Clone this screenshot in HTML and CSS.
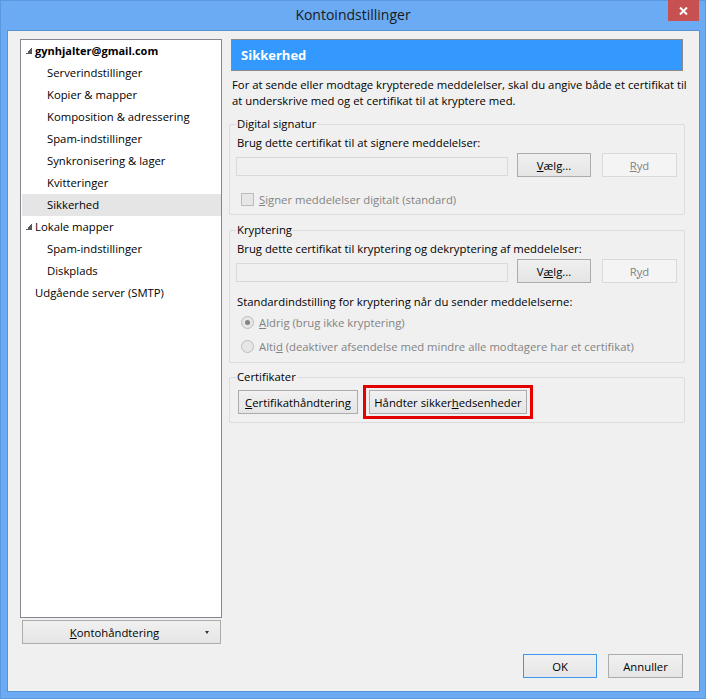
FILE: index.html
```html
<!DOCTYPE html>
<html lang="da">
<head>
<meta charset="utf-8">
<title>Kontoindstillinger</title>
<link rel="stylesheet" href="styles.css">
</head>
<body>
<div class="window">
  <div class="titlebar">
    <span class="title">Kontoindstillinger</span>
    <div class="close" aria-label="Luk">
      <svg width="9" height="8" viewBox="0 0 9 8"><path d="M1 0.5 L8 7.5 M8 0.5 L1 7.5" stroke="#fff" stroke-width="2" fill="none"/></svg>
    </div>
  </div>
  <div class="client">
    <div class="main">
      <div class="left">
        <ul class="tree">
          <li class="row root"><span class="twisty"></span><span class="bold">gynhjalter@gmail.com</span></li>
          <li class="row child">Serverindstillinger</li>
          <li class="row child">Kopier &amp; mapper</li>
          <li class="row child">Komposition &amp; adressering</li>
          <li class="row child">Spam-indstillinger</li>
          <li class="row child">Synkronisering &amp; lager</li>
          <li class="row child">Kvitteringer</li>
          <li class="row child selected">Sikkerhed</li>
          <li class="row root"><span class="twisty"></span>Lokale mapper</li>
          <li class="row child">Spam-indstillinger</li>
          <li class="row child">Diskplads</li>
          <li class="row root noicon">Udgående server (SMTP)</li>
        </ul>
        <button class="btn acct"><span><u>K</u>ontohåndtering</span><span class="drop"></span></button>
      </div>
      <div class="right">
        <div class="header">Sikkerhed</div>
        <p class="desc">For at sende eller modtage krypterede meddelelser, skal du angive både et certifikat til<br>at underskrive med og et certifikat til at kryptere med.</p>

        <fieldset class="group">
          <legend>Digital signatur</legend>
          <div class="label">Brug dette certifikat til at signere meddelelser:</div>
          <div class="certrow">
            <div class="field"></div>
            <button class="btn pick"><u>V</u>ælg...</button>
            <button class="btn clear" disabled><u>R</u>yd</button>
          </div>
          <div class="check disabled"><span class="box"></span><span><u>S</u>igner meddelelser digitalt (standard)</span></div>
        </fieldset>

        <fieldset class="group g2">
          <legend>Kryptering</legend>
          <div class="label">Brug dette certifikat til kryptering og dekryptering af meddelelser:</div>
          <div class="certrow">
            <div class="field"></div>
            <button class="btn pick">V<u>æ</u>lg...</button>
            <button class="btn clear" disabled>R<u>y</u>d</button>
          </div>
          <div class="label std">Standardindstilling for kryptering når du sender meddelelserne:</div>
          <div class="radio disabled"><span class="dot checked"></span><span><u>A</u>ldrig (brug ikke kryptering)</span></div>
          <div class="radio disabled"><span class="dot"></span><span>Alti<u>d</u> (deaktiver afsendelse med mindre alle modtagere har et certifikat)</span></div>
        </fieldset>

        <fieldset class="group g3">
          <legend>Certifikater</legend>
          <div class="btnrow">
            <button class="btn cert"><u>C</u>ertifikathåndtering</button>
            <div class="mark"><button class="btn devices">Håndter sikker<u>h</u>edsenheder</button></div>
          </div>
        </fieldset>
      </div>
    </div>
    <div class="footer">
      <button class="btn ok">OK</button>
      <button class="btn cancel">Annuller</button>
    </div>
  </div>
</div>
</body>
</html>
```
FILE: styles.css
```css
* { box-sizing: border-box; }
html, body { margin: 0; padding: 0; }
body {
  width: 706px;
  height: 699px;
  overflow: hidden;
  font-family: "Open Sans", "Noto Sans", sans-serif;
  font-size: 11.3px;
  color: #000;
}
.window {
  position: relative;
  width: 706px;
  height: 699px;
  background: #6aabf4;
  box-shadow: inset 0 0 0 1px #5d98df;
}
.titlebar {
  height: 30px;
  display: flex;
  align-items: center;
  justify-content: center;
}
.title {
  font-size: 14px;
  color: #1a1a1a;
  margin-top: -1px;
}
.close {
  position: absolute;
  left: 668px;
  top: 0;
  width: 31px;
  height: 21px;
  background: #c75050;
  display: flex;
  align-items: center;
  justify-content: center;
}
.client {
  margin: 0 6px 0 7px;
  height: 662px;
  border: 1px solid #5892d6;
  background: #f0f0f0;
  display: flex;
  flex-direction: column;
  padding: 8px 14px 13px 12px;
}
.main {
  flex: 1;
  display: flex;
  gap: 7px;
}
.left {
  width: 202px;
  display: flex;
  flex-direction: column;
}
.tree {
  flex: 1;
  margin: 0;
  padding: 0;
  list-style: none;
  background: #fff;
  border: 1px solid #828790;
}
.row {
  height: 22px;
  line-height: 22px;
  white-space: nowrap;
  display: flex;
  align-items: center;
}
.root { padding-left: 5px; }
.root.noicon { padding-left: 14px; }
.child { padding-left: 26px; }
.selected { background: #e5e5e5; margin-left: 1px; padding-left: 25px; }
.twisty {
  width: 6px;
  height: 6px;
  margin-right: 3px;
  background: linear-gradient(to bottom right, transparent 50%, #575757 50%);
}
.bold { font-weight: bold; font-size: 11px; }
.btn {
  font: inherit;
  color: #000;
  height: 24px;
  padding: 0;
  border: 1px solid #acacac;
  background: linear-gradient(#f0f0f0, #e5e5e5);
  border-radius: 0;
  cursor: default;
  white-space: nowrap;
}
.btn:disabled {
  color: #838383;
  background: #f4f4f4;
  border-color: #d9d9d9;
}
.acct {
  margin: 2px 1px 0 2px;
  position: relative;
  display: flex;
  align-items: center;
  justify-content: center;
  padding-right: 14px;
}
.drop {
  position: absolute;
  right: 11px;
  top: 10px;
  width: 0;
  height: 0;
  border-left: 2.5px solid transparent;
  border-right: 2.5px solid transparent;
  border-top: 3px solid #333;
}
.right {
  width: 456px;
  display: flex;
  flex-direction: column;
}
.header {
  margin: 0 2px;
  height: 32px;
  border: 1px solid #8a8a8a;
  background: #3399ff;
  color: #fff;
  font-weight: bold;
  font-size: 13px;
  line-height: 30px;
  padding-left: 9px;
}
.desc {
  margin: 6px 0 0;
  padding-left: 3px;
  line-height: 16px;
  white-space: nowrap;
}
.group {
  margin: 7px 0 0;
  padding: 0 7px 7px 6px;
  border: 1px solid #dcdcdc;
  border-radius: 2px;
  min-width: 0;
}
.group legend {
  padding: 0 1px;
  line-height: 16px;
}
.g2 { padding-bottom: 4px; }
.g3 { margin-top: 6px; padding-bottom: 8px; }
.label {
  margin-top: 3px;
  padding-left: 1px;
  line-height: 16px;
  white-space: nowrap;
}
.label.std { margin-top: 11px; }
.certrow {
  margin-top: 2px;
  display: flex;
  align-items: flex-end;
}
.field {
  width: 272px;
  height: 19px;
  margin-bottom: 1px;
  border: 1px solid #d9d9d9;
  background: #f0f0f0;
}
.pick { width: 74px; margin-left: 9px; }
.clear { width: 75px; margin-left: 11px; }
.check, .radio {
  display: flex;
  align-items: center;
  white-space: nowrap;
}
.check { margin-top: 14px; height: 16px; }
.radio { height: 24px; }
.disabled { color: #838383; }
.box {
  width: 13px;
  height: 13px;
  margin: 0 5px 0 5px;
  border: 1px solid #bcbcbc;
  background: #e6e6e6;
}
.dot {
  width: 13px;
  height: 13px;
  margin: 0 5px 0 5px;
  border: 1px solid #bcbcbc;
  border-radius: 50%;
  background: #e6e6e6;
  display: flex;
  align-items: center;
  justify-content: center;
}
.dot.checked::after {
  content: "";
  width: 5px;
  height: 5px;
  border-radius: 50%;
  background: #838383;
}
.btnrow {
  margin-top: 5px;
  display: flex;
  align-items: center;
}
.cert { width: 120px; margin-left: 2px; }
.mark {
  margin: -5px 0 -5px 5px;
  border: 3px solid #e50000;
  padding: 2px 3px;
}
.devices { width: 158px; display: block; }
.footer {
  height: 24px;
  margin-top: 10px;
  padding-right: 2px;
  display: flex;
  justify-content: flex-end;
  gap: 11px;
}
.ok { width: 74px; border-color: #3c99f0; }
.cancel { width: 75px; }
```
